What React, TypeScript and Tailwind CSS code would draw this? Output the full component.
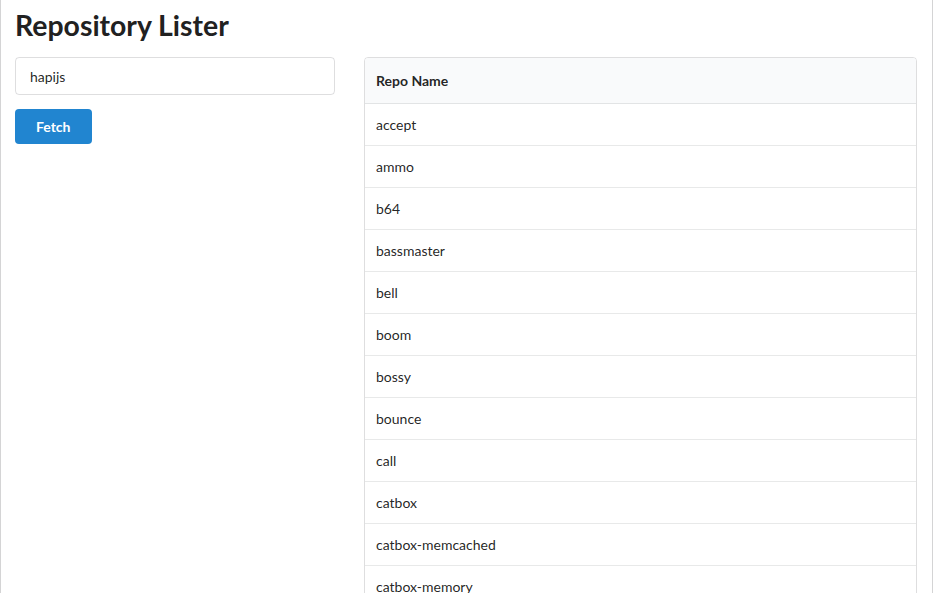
import React from "react";

const repos = [
  "accept",
  "ammo",
  "b64",
  "bassmaster",
  "bell",
  "boom",
  "bossy",
  "bounce",
  "call",
  "catbox",
  "catbox-memcached",
  "catbox-memory",
  "catbox-mongodb",
  "catbox-redis",
];

export default function App() {
  return (
    <div className="h-[593px] w-[944px] overflow-hidden bg-white" style={{ fontFamily: "Lato, 'Helvetica Neue', Arial, sans-serif" }}>
      <div className="h-full w-[933px] border-x border-[#d4d4d5] pl-[14px] pr-[15px] text-[14px] text-[rgba(0,0,0,0.87)]">
        <h1 className="pt-[7px] text-[28.4px] font-bold leading-[36px] text-[#212121]">Repository Lister</h1>
        <div className="mt-[14px] flex gap-[29px]">
          <div className="flex w-[320px] shrink-0 flex-col items-start">
            <input
              readOnly
              value="hapijs"
              className="h-[38px] w-full rounded-[4px] border border-[rgba(34,36,38,0.15)] px-[14px] text-[14px] text-[rgba(0,0,0,0.87)] outline-none"
            />
            <button className="mt-[14px] h-[35px] rounded-[4px] bg-[#2185d0] px-[21px] text-[14px] font-bold text-white">
              Fetch
            </button>
          </div>
          <div className="w-[553px] shrink-0">
            <div className="overflow-hidden rounded-t-[4px] border border-[rgba(34,36,38,0.15)]">
              <div className="h-[46px] border-b border-[rgba(34,36,38,0.1)] bg-[#f9fafb] px-[11px] text-[14px] font-bold leading-[45px] text-[rgba(0,0,0,0.87)]">
                Repo Name
              </div>
              {repos.map((r) => (
                <div
                  key={r}
                  className="h-[42px] border-b border-[rgba(34,36,38,0.1)] px-[11px] leading-[41px]"
                >
                  {r}
                </div>
              ))}
            </div>
          </div>
        </div>
      </div>
    </div>
  );
}
